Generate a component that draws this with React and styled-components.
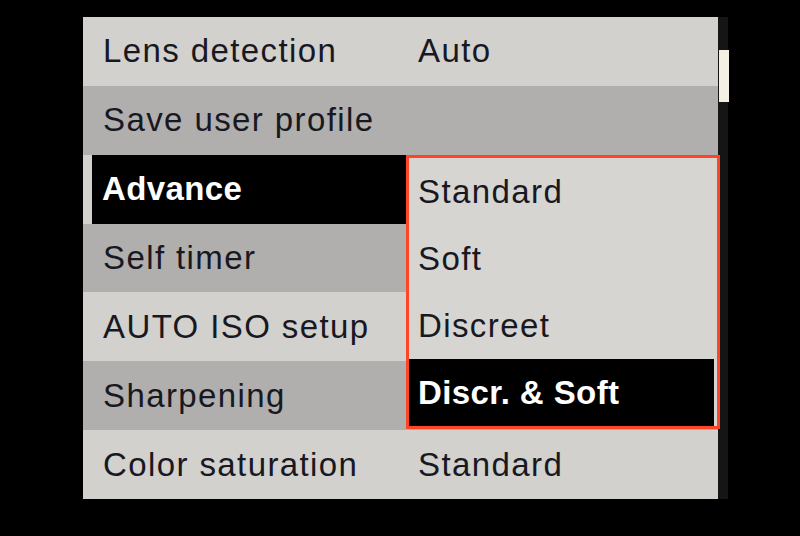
import styled, { createGlobalStyle } from 'styled-components';

const GlobalStyle = createGlobalStyle`
  html, body {
    margin: 0;
    padding: 0;
    background: #000;
  }
`;

const rows = [
  { label: 'Lens detection', value: 'Auto', tone: 'light' },
  { label: 'Save user profile', value: '', tone: 'gray' },
  { label: 'Advance', value: '', tone: 'light', selected: true },
  { label: 'Self timer', value: '', tone: 'gray' },
  { label: 'AUTO ISO setup', value: '', tone: 'light' },
  { label: 'Sharpening', value: '', tone: 'gray' },
  { label: 'Color saturation', value: 'Standard', tone: 'light' },
];

const options = ['Standard', 'Soft', 'Discreet', 'Discr. & Soft'];
const activeOption = 3;

export default function App() {
  return (
    <Screen>
      <GlobalStyle />
      <Panel>
        {rows.map((r) => (
          <Row key={r.label} $tone={r.tone}>
            <Label $selected={r.selected}>{r.label}</Label>
            <Value>{r.value}</Value>
          </Row>
        ))}

        {/* submenu opened over the value column */}
        <Popup>
          {options.map((o, i) => (
            <Option key={o} $selected={i === activeOption}>{o}</Option>
          ))}
        </Popup>
      </Panel>
      <ScrollTrack>
        <Thumb />
      </ScrollTrack>
    </Screen>
  );
}

const Screen = styled.div`
  display: flex;
  align-items: flex-start;
  width: 800px;
  height: 536px;
  box-sizing: border-box;
  padding: 17px 0 0 83px;
  background: #000;
  font-family: "Liberation Sans", Arial, sans-serif;
  font-size: 33px;
  letter-spacing: 1.4px;
  color: #181822;
`;

const Panel = styled.div`
  position: relative;
  width: 635px;
  height: 482px;
  display: grid;
  grid-template-rows: repeat(7, 1fr);
`;

const Row = styled.div`
  display: grid;
  grid-template-columns: 323px 1fr;
  align-items: stretch;
  background: ${(p) => (p.$tone === 'gray' ? '#b0afad' : '#d2d1cd')};
`;

const Label = styled.div`
  display: flex;
  align-items: center;
  white-space: nowrap;
  padding-left: ${(p) => (p.$selected ? '10px' : '20px')};
  margin-left: ${(p) => (p.$selected ? '9px' : '0')};
  background: ${(p) => (p.$selected ? '#000' : 'transparent')};
  color: ${(p) => (p.$selected ? '#fff' : 'inherit')};
  font-weight: ${(p) => (p.$selected ? 700 : 400)};
  letter-spacing: ${(p) => (p.$selected ? '0.4px' : 'inherit')};
`;

const Value = styled.div`
  display: flex;
  align-items: center;
  padding-left: 12px;
  white-space: nowrap;
`;

const Popup = styled.div`
  position: absolute;
  left: 323px;
  top: 138px;
  width: 314px;
  height: 274px;
  box-sizing: border-box;
  border: 3px solid #ff4528;
  background: #d6d5d1;
  display: grid;
  grid-template-rows: repeat(4, 1fr);
  padding: 0 3px 0 0;
  z-index: 2;
`;

const Option = styled.div`
  display: flex;
  align-items: center;
  padding-left: 9px;
  white-space: nowrap;
  background: ${(p) => (p.$selected ? '#000' : 'transparent')};
  color: ${(p) => (p.$selected ? '#fff' : 'inherit')};
  font-weight: ${(p) => (p.$selected ? 700 : 400)};
  letter-spacing: ${(p) => (p.$selected ? '0.4px' : 'inherit')};
`;

const ScrollTrack = styled.div`
  width: 10px;
  height: 482px;
  background: #151515;
`;

const Thumb = styled.div`
  margin: 33px 0 0 1px;
  width: 10px;
  height: 52px;
  background: #f4f0e4;
`;
